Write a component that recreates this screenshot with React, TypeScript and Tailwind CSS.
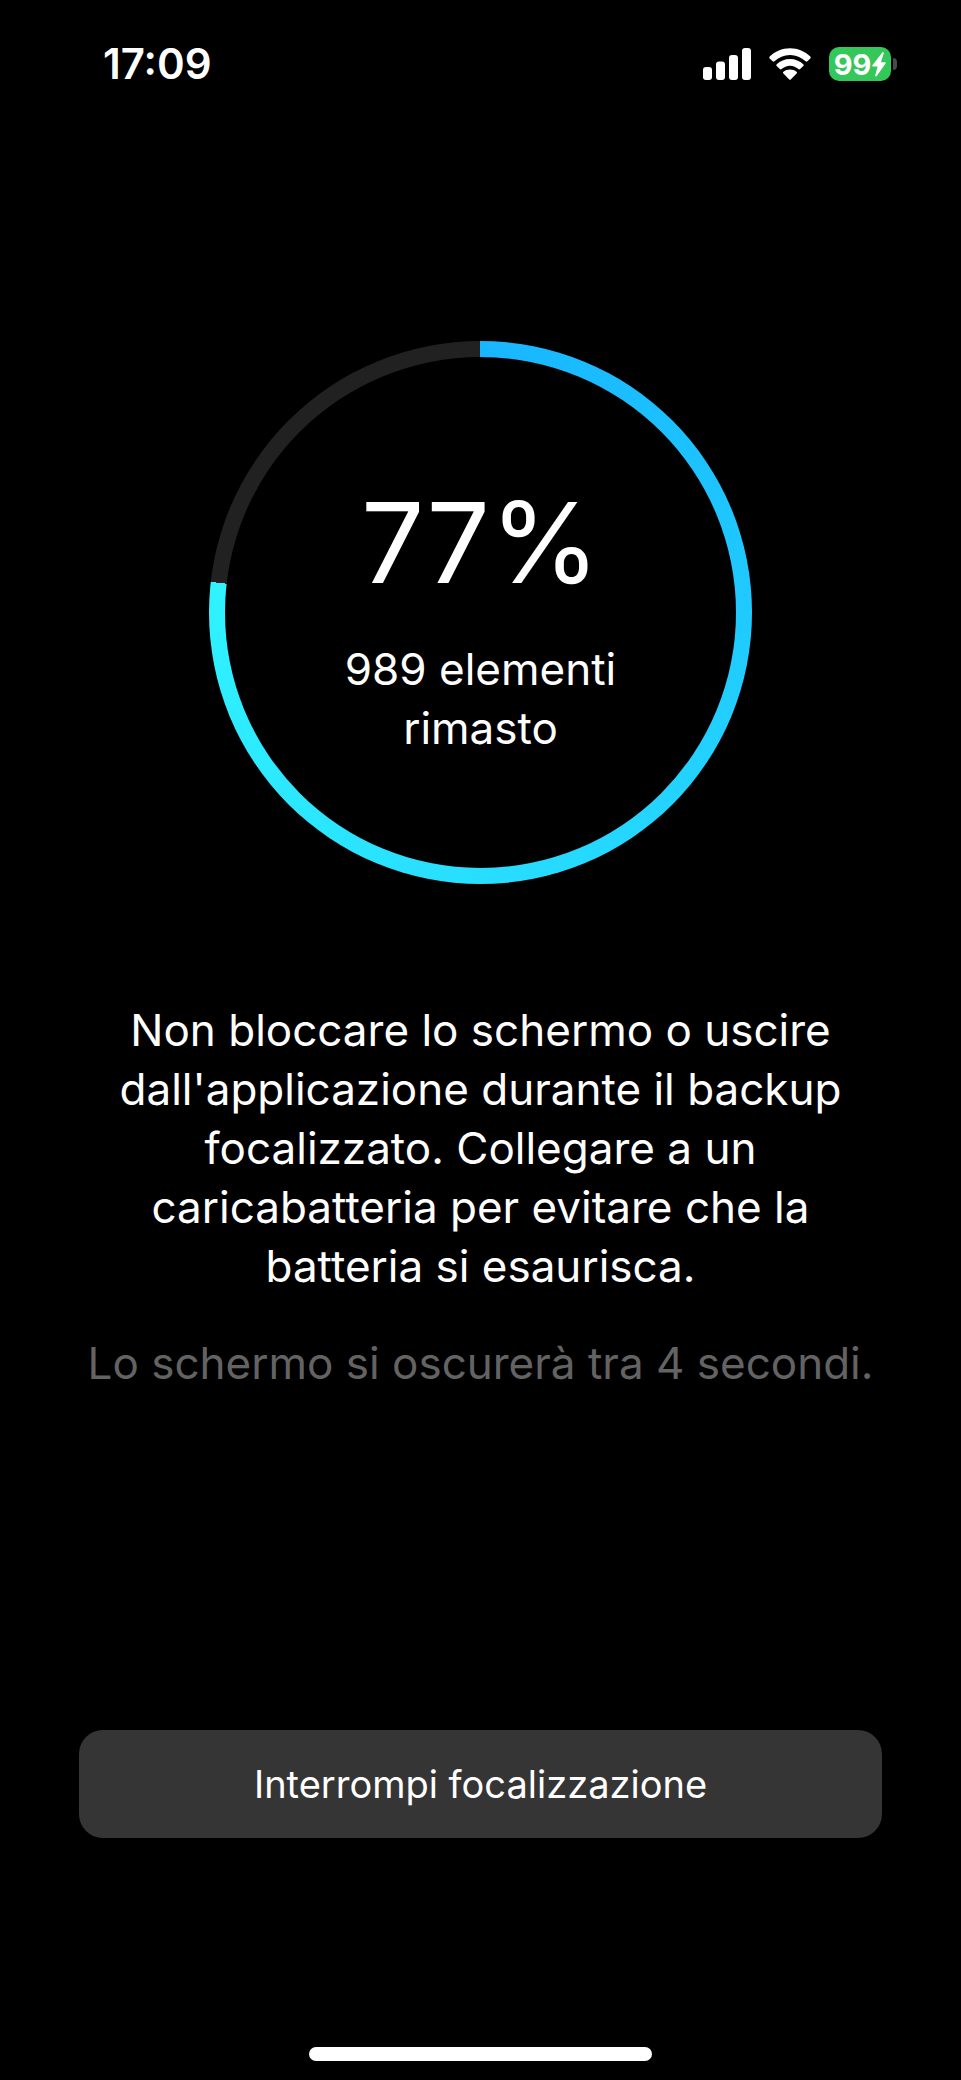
function SignalIcon() {
  return (
    <svg viewBox="0 0 48 32" className="h-8 w-12" fill="currentColor" aria-hidden="true">
      <rect x="0" y="19" width="9" height="13" rx="3" />
      <rect x="13" y="13.5" width="9" height="18.5" rx="3" />
      <rect x="26" y="7" width="9" height="25" rx="3" />
      <rect x="39" y="0" width="9" height="32" rx="3" />
    </svg>
  );
}

function WifiIcon() {
  return (
    <svg viewBox="0 0 42 32" className="h-8 w-[42px]" fill="currentColor" aria-hidden="true">
      <path d="M21 0.3C29 0.3 36 3.4 41.3 8.6a1.3 1.3 0 0 1 0 1.8L38.4 13.3a1.3 1.3 0 0 1-1.8 0C32.4 9.3 27 7 21 7S9.6 9.3 5.4 13.3a1.3 1.3 0 0 1-1.8 0L0.7 10.4a1.3 1.3 0 0 1 0-1.8C6 3.4 13 0.3 21 0.3Z" />
      <path d="M21 10.9C26.2 10.9 30.8 12.9 34.3 16.2a1.3 1.3 0 0 1 0 1.9L31.2 21a1.3 1.3 0 0 1-1.8 0C27.1 19 24.2 17.7 21 17.7S14.9 19 12.6 21a1.3 1.3 0 0 1-1.8 0L7.7 18.1a1.3 1.3 0 0 1 0-1.9C11.2 12.9 15.8 10.9 21 10.9Z" />
      <path d="M21 21.4c2.5 0 4.7 0.9 6.5 2.3a1.2 1.2 0 0 1 0.1 1.8L22 31.2a1.4 1.4 0 0 1-2 0L14.4 25.5a1.2 1.2 0 0 1 0.1-1.8C16.3 22.3 18.5 21.4 21 21.4Z" />
    </svg>
  );
}

function Battery({ level }: { level: number }) {
  return (
    <div className="flex items-center gap-[2px]">
      <div className="flex h-[34px] w-[62px] items-center justify-center gap-px rounded-[10px] bg-[#34c759]">
        <span className="text-[29px] leading-none font-bold">{level}</span>
        <svg viewBox="0 0 14 25" className="h-[25px] w-[14px]" fill="currentColor" aria-hidden="true">
          <path d="M10.3 0.6 0.4 13.2c-0.5 0.7-0.1 1.3 0.6 1.3H5.6L3.2 23.4c-0.3 1.2 0.8 1.6 1.5 0.7L13.6 11.5c0.5-0.7 0.1-1.3-0.6-1.3H8.9L11.7 1.4C12.1 0.2 11-0.3 10.3 0.6Z" />
        </svg>
      </div>
      <div className="h-3 w-1 rounded-r-full bg-[#4a4a4c]" />
    </div>
  );
}

function StatusBar() {
  return (
    <header className="flex h-32 items-center justify-between pr-16 pl-[103px]">
      <time className="text-[42px] leading-none font-semibold">17:09</time>
      <div className="flex items-center gap-[18px]">
        <SignalIcon />
        <WifiIcon />
        <Battery level={99} />
      </div>
    </header>
  );
}

function ProgressRing({ progress, remaining }: { progress: number; remaining: number }) {
  return (
    <div
      className="size-[543px] rounded-full p-4"
      style={{
        backgroundImage: `conic-gradient(#18b6ff, #30f3ff ${progress}%, #212121 ${progress}%)`,
      }}
    >
      <div className="flex size-full flex-col items-center justify-center gap-10 rounded-full bg-black px-24 pt-4 text-center">
        <p className="text-[112px] leading-[116px]">{`${Math.round(progress)}%`}</p>
        <p className="text-[44px] leading-[59px]">{`${remaining} elementi rimasto`}</p>
      </div>
    </div>
  );
}

export default function App() {
  return (
    <div className="flex min-h-screen flex-col bg-black font-['Inter',sans-serif] text-white">
      <StatusBar />

      <main className="flex flex-1 flex-col items-center px-[79px] pt-[213px]">
        <ProgressRing progress={76.8} remaining={989} />

        <p className="mt-[117px] w-full max-w-[740px] text-center text-[44px] leading-[59px]">
          Non bloccare lo schermo o uscire dall'applicazione durante il backup focalizzato. Collegare a un
          caricabatteria per evitare che la batteria si esaurisca.
        </p>
        <p className="mt-[38px] text-center text-[44px] leading-[59px] text-[#636363]">
          Lo schermo si oscurerà tra 4 secondi.
        </p>

        <button
          type="button"
          className="mt-auto h-[108px] w-full cursor-pointer rounded-3xl bg-[#353535] text-[38px] leading-none"
        >
          Interrompi focalizzazione
        </button>
      </main>

      <footer className="flex justify-center pt-[209px] pb-[19px]">
        <div className="h-[14px] w-[343px] rounded-full bg-white" />
      </footer>
    </div>
  );
}
